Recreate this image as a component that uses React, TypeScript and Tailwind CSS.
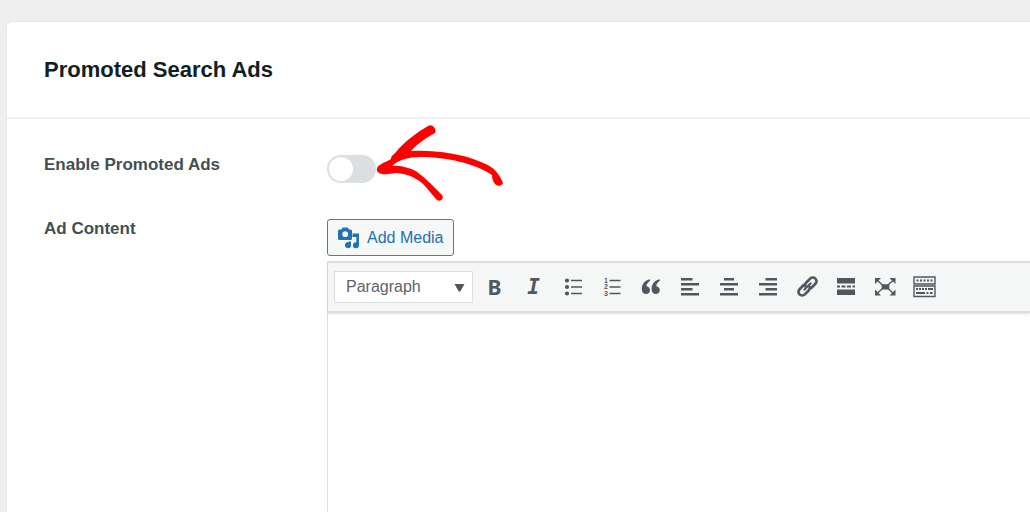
import { useState } from "react";
import type { ReactNode } from "react";

function Icon({ children }: { children: ReactNode }) {
  return (
    <svg width="25" height="24" viewBox="0 0 25 24" fill="currentColor" stroke="none" aria-hidden="true">
      {children}
    </svg>
  );
}

function ToolButton({ label, children }: { label: string; children: ReactNode }) {
  return (
    <button type="button" aria-label={label} className="flex h-8 w-[39px] shrink-0 items-center justify-center text-[#50575e]">
      {children}
    </button>
  );
}

function Toolbar() {
  return (
    <div className="flex h-[52px] items-center overflow-hidden border-t-2 border-b-2 border-[#dcdfe0] bg-[#f5f7f7] pl-1.5 shadow-[0_1px_2px_rgba(0,0,0,0.12)]">
      <div className="relative mr-[3px] shrink-0">
        <select aria-label="Text format" className="block h-8 w-[139px] appearance-none border border-[#dcdfe0] bg-white pl-[11px] text-base text-[#5f6468]">
          <option>Paragraph</option>
          <option>Heading 1</option>
          <option>Heading 2</option>
        </select>
        <svg className="pointer-events-none absolute top-3 right-2" width="11" height="9" viewBox="0 0 11 9" fill="#50575e" aria-hidden="true">
          <path d="M0.5 1h10L6.300 8.500H4.700z" />
        </svg>
      </div>

      <ToolButton label="Bold">
        <span className="pr-0.5 font-['Noto_Sans',sans-serif] text-[21px] leading-6 font-bold">B</span>
      </ToolButton>
      <ToolButton label="Italic">
        <span className="pr-0.5 font-['DejaVu_Sans_Mono',monospace] text-[21px] leading-6 font-bold italic">I</span>
      </ToolButton>
      <ToolButton label="Bulleted list">
        <Icon>
          <circle cx="6" cy="5.500" r="2.100" />
          <circle cx="6" cy="12" r="2.100" />
          <circle cx="6" cy="18.500" r="2.100" />
          <path d="M10 4.800h11v1.400H10zM10 11.300h11v1.400H10zM10 17.800h11v1.400H10z" />
        </Icon>
      </ToolButton>
      <ToolButton label="Numbered list">
        <Icon>
          <g className="font-['Liberation_Sans',sans-serif] text-[7px] font-bold">
            <text x="4" y="8">1</text>
            <text x="4" y="14">2</text>
            <text x="4" y="21">3</text>
          </g>
          <path d="M9.500 4.800h11v1.400h-11zM9.500 11.300h11v1.400h-11zM9.500 17.800h11v1.400h-11z" />
        </Icon>
      </ToolButton>
      <ToolButton label="Blockquote">
        <Icon>
          <path d="M10.800 4.300C6 5.300 2.800 9 2.800 13.900c0 3.200 1.800 5.200 4.300 5.200 2.200 0 3.900-1.700 3.900-3.900s-1.600-3.800-3.600-3.900c.2-2.200 1.400-4 3.700-5.600z" />
          <path d="M20.600 4.300c-4.800 1-8 4.700-8 9.600 0 3.200 1.800 5.200 4.300 5.200 2.200 0 3.900-1.700 3.900-3.900s-1.600-3.800-3.600-3.900c.2-2.200 1.400-4 3.700-5.600z" />
        </Icon>
      </ToolButton>
      <ToolButton label="Align left">
        <Icon>
          <path d="M3 3h11.500v2.400H3zM3 8h18v2.400H3zM3 13h11.500v2.400H3zM3 18h18v2.400H3z" />
        </Icon>
      </ToolButton>
      <ToolButton label="Align center">
        <Icon>
          <path d="M7 3h10v2.400H7zM3 8h18v2.400H3zM7 13h10v2.400H7zM3 18h18v2.400H3z" />
        </Icon>
      </ToolButton>
      <ToolButton label="Align right">
        <Icon>
          <path d="M9.500 3H21v2.400H9.500zM3 8h18v2.400H3zM9.500 13H21v2.400H9.500zM3 18h18v2.400H3z" />
        </Icon>
      </ToolButton>
      <ToolButton label="Insert link">
        <Icon>
          <g fill="none" stroke="currentColor" strokeWidth="2.700" strokeLinecap="round" transform="rotate(-45 12.500 11.500)">
            <path d="M11 7.800H5a3.700 3.700 0 0 0 0 7.400h5.500a3.700 3.700 0 0 0 3.300-2" />
            <path d="M14 15.200h6a3.700 3.700 0 0 0 0-7.400h-5.500a3.700 3.700 0 0 0-3.300 2" />
            <path strokeWidth="2" d="M8 11.500h9" />
          </g>
        </Icon>
      </ToolButton>
      <ToolButton label="Read more">
        <Icon>
          <path d="M3 3h18v5.500H3zM3 14.500h18V20H3zM3 10.500h3v2H3zM7.500 10.500h4v2h-4zM13 10.500h4v2h-4zM18.500 10.500H21v2h-2.500z" />
        </Icon>
      </ToolButton>
      <ToolButton label="Fullscreen">
        <Icon>
          <path d="M8.700 9.200h7.600v5.200H8.700zM2 3h6L2 9zM22.500 3h-6l6 6zM2 20.500h6l-6-6zM22.500 20.500h-6l6-6z" />
          <path d="M4 5l5.500 5M20.500 5L15 10M4 18.500l5.500-5M20.500 18.500l-5.500-5" stroke="currentColor" strokeWidth="1.400" />
        </Icon>
      </ToolButton>
      <ToolButton label="Toolbar toggle">
        <Icon>
          <path d="M2 2h21v7H2zM2 11h21v10.500H2z" fill="none" stroke="currentColor" strokeWidth="1.400" />
          <path d="M4.500 4.500h2v2h-2zM8 4.500h2v2H8zM11.500 4.500h2v2h-2zM15 4.500h2v2h-2zM18.500 4.500h2v2h-2z" />
          <path d="M4 13h2v2H4zM7 13h2v2H7zM10 13h2v2h-2zM13 13h2v2h-2zM16 13h5v2h-5zM4 17h9v2H4zM14.500 17h2v2h-2zM18 17h2.500v2H18z" />
        </Icon>
      </ToolButton>
    </div>
  );
}

function HandDrawnArrow() {
  return (
    <svg className="pointer-events-none absolute -top-[31px] left-[49px]" width="128" height="78" viewBox="0 0 128 78" fill="#ff0000" aria-hidden="true">
      <path d="M1 45C1 41 8 39 15 35C15 31 18 31 20 28C28 18 40 9 52 2C57-1 61 6 59 9C52 13 43 18 35 27C58 26 84 29 105 38C113 41 119 45 122 50C124 53 126 56 127 59C126 62 122 63 119 60C117 57 116 55 116 51C100 40 72 33 44 33C33 33 22 36 16 42C23 41 28 43 32 44C39 45 48 53 54 59L66 71C69 75 63 79 60 75C55 69 51 64 46 59C37 52 30 50 21 49C15 49 11 51 6 50C2 49 0 47 1 45Z" />
    </svg>
  );
}

export default function App() {
  const [enabled, setEnabled] = useState(false);

  return (
    <div className="flex min-h-screen flex-col overflow-hidden bg-[#efefef] pt-[21px] pl-1.5 font-['Liberation_Sans',Arial,sans-serif]">
      <main className="flex flex-1 flex-col rounded-tl-md border-t border-l border-[#e8e8ea] bg-white">
        <header className="border-b-2 border-[#efefef] px-[37px] pt-8 pb-[31px]">
          <h1 className="text-[22px] leading-8 font-bold text-[#11201f]">Promoted Search Ads</h1>
        </header>

        <form className="flex flex-1 flex-col pl-[37px]">
          {/* Enable toggle */}
          <div className="flex py-9">
            <label htmlFor="enable-ads" className="w-[283px] shrink-0 text-[17px] leading-5 font-bold text-[#43504f]">
              Enable Promoted Ads
            </label>
            <div className="relative flex">
              <input
                id="enable-ads"
                type="checkbox"
                checked={enabled}
                onChange={(e) => setEnabled(e.target.checked)}
                className="h-7 w-[49px] appearance-none rounded-full bg-[#dcdfe0] p-0.5 before:block before:size-6 before:rounded-full before:bg-white checked:bg-[#2271b1] checked:before:translate-x-[21px]"
              />
              <HandDrawnArrow />
            </div>
          </div>

          {/* Ad editor */}
          <div className="flex flex-1">
            <label htmlFor="ad-content" className="w-[283px] shrink-0 text-[17px] leading-5 font-bold text-[#43504f]">
              Ad Content
            </label>
            <div className="flex min-w-0 flex-1 flex-col items-start">
              <button type="button" className="flex h-[37px] items-center gap-1.5 rounded-[3px] border border-[#3582c4] bg-[#f6f7f7] px-[9px] text-base text-[#2271b1]">
                <svg width="24" height="22" viewBox="0 0 24 22" fill="currentColor" aria-hidden="true">
                  <path fillRule="evenodd" d="M2.500 2.500h2L5.700.500h5L12 2.500h1.500q1.500 0 1.500 1.500v7.500q0 1.500-1.500 1.500h-11q-1.500 0-1.500-1.500V4q0-1.500 1.500-1.500zM8.200 4.300a2.900 2.900 0 1 0 0 5.800a2.900 2.900 0 1 0 0-5.800z" />
                  <path d="M15.500 6.500H22v11.700a3 3 0 1 1-2.600-3V10h-3.900zM11.700 14.500H14v3.700a3 3 0 1 1-2.300-3z" />
                </svg>
                Add Media
              </button>
              <div className="mt-[5px] flex w-full flex-1 flex-col border-l border-[#dcdfe0]">
                <Toolbar />
                <textarea id="ad-content" className="min-h-48 w-full flex-1 resize-none bg-transparent p-3 text-base outline-none" />
              </div>
            </div>
          </div>
        </form>
      </main>
    </div>
  );
}
